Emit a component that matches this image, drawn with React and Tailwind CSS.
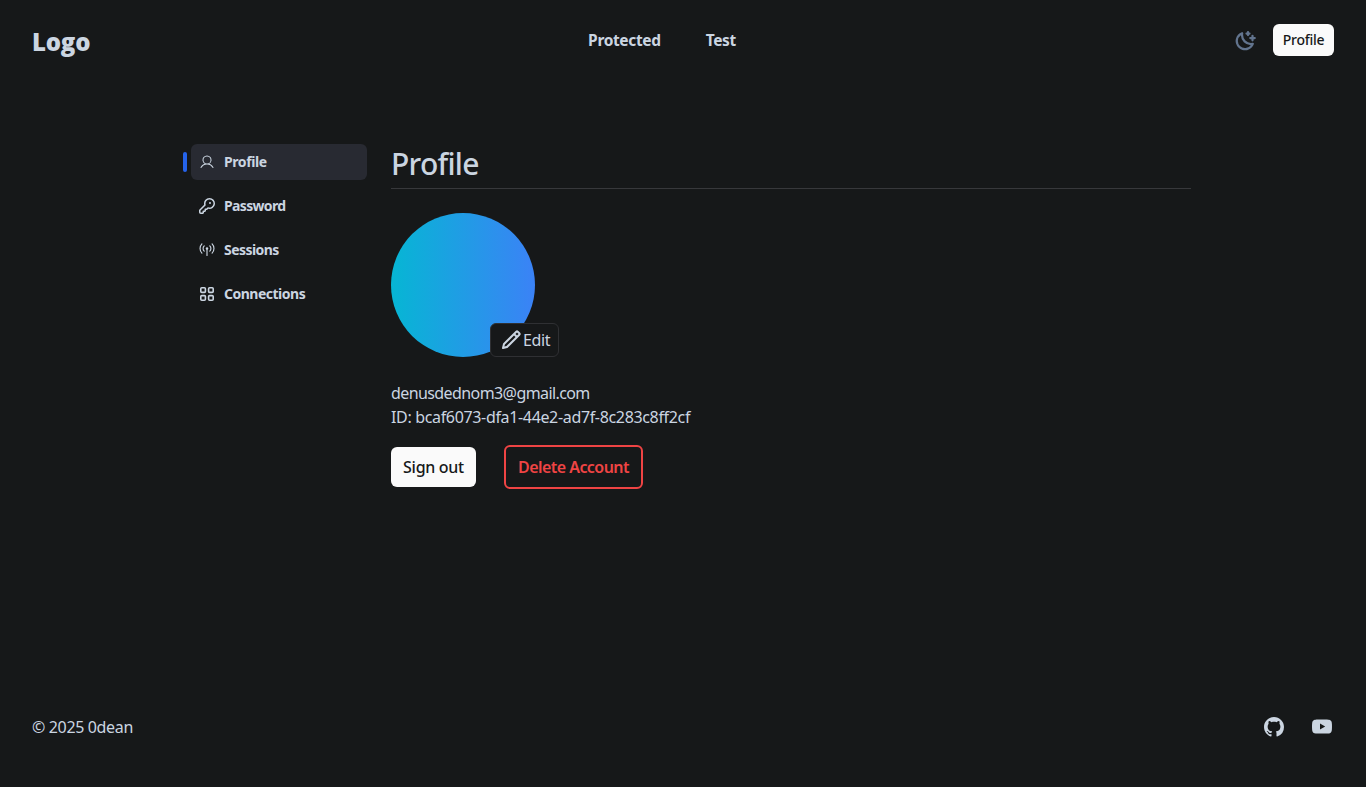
import { PiMoonStarsBold, PiUser } from "react-icons/pi";
import { BiPencil } from "react-icons/bi";
import { BsGithub, BsYoutube } from "react-icons/bs";

function KeyIcon({ size }) {
  return (
    <svg width={size} height={size} viewBox="0 0 16 16" fill="currentColor">
      <path d="M10.5 0a5.499 5.499 0 1 1-1.288 10.848l-.932.932a.749.749 0 0 1-.53.22H7v.75a.749.749 0 0 1-.22.53l-.5.5a.749.749 0 0 1-.53.22H5v.75a.749.749 0 0 1-.22.53l-.5.5a.749.749 0 0 1-.53.22h-2A1.75 1.75 0 0 1 0 14.25v-2c0-.199.079-.389.22-.53l4.932-4.932A5.5 5.5 0 0 1 10.5 0Zm-4 5.5c-.001.431.069.86.205 1.269a.75.75 0 0 1-.181.768L1.5 12.56v1.69c0 .138.112.25.25.25h1.69l.06-.06v-1.19a.75.75 0 0 1 .75-.75h1.19l.06-.06v-1.19a.75.75 0 0 1 .75-.75h1.19l1.023-1.025a.75.75 0 0 1 .768-.18A4 4 0 1 0 6.5 5.5ZM11 6a1 1 0 1 1 0-2 1 1 0 0 1 0 2Z" />
    </svg>
  );
}

function BroadcastIcon({ size }) {
  return (
    <svg width={size} height={size} viewBox="0 0 16 16" fill="none" stroke="currentColor" strokeWidth="1.15" strokeLinecap="round">
      <path d="M2.9 1.9a6.6 6.6 0 0 0 0 9.2M13.1 1.9a6.6 6.6 0 0 1 0 9.2M5.2 3.9a3.6 3.6 0 0 0 0 5.2M10.8 3.9a3.6 3.6 0 0 1 0 5.2M8 6.5v7" />
      <circle cx="8" cy="6.5" r="1.2" fill="currentColor" stroke="none" />
    </svg>
  );
}

function AppsIcon({ size }) {
  return (
    <svg width={size} height={size} viewBox="0 0 16 16" fill="none" stroke="currentColor" strokeWidth="1.6">
      <rect x="1.8" y="1.8" width="4.6" height="4.6" rx="1" />
      <rect x="9.6" y="1.8" width="4.6" height="4.6" rx="1" />
      <rect x="1.8" y="9.6" width="4.6" height="4.6" rx="1" />
      <rect x="9.6" y="9.6" width="4.6" height="4.6" rx="1" />
    </svg>
  );
}

const links = [
  { label: "Profile", icon: PiUser, active: true, track: "tracking-[-0.4px]" },
  { label: "Password", icon: KeyIcon, track: "tracking-[-0.65px]" },
  { label: "Sessions", icon: BroadcastIcon, track: "tracking-[-0.55px]" },
  { label: "Connections", icon: AppsIcon, track: "tracking-[-0.5px]" },
];

function Header() {
  return (
    <header className="flex h-20 items-center justify-between px-8">
      <div className="w-[158px] pt-1 font-['Open_Sans',sans-serif] text-2xl font-extrabold tracking-[-0.2px]">Logo</div>
      <nav className="flex gap-[45px] pt-0.5 text-[15.5px] font-bold tracking-[-0.35px]">
        <a>Protected</a>
        <a>Test</a>
      </nav>
      <div className="flex w-[200px] items-center justify-end gap-4">
        <PiMoonStarsBold size={24} className="mt-px text-slate-500" />
        <button className="h-8 w-[61px] rounded-md bg-neutral-50 text-sm font-medium tracking-[-0.25px] text-[#161819]">
          Profile
        </button>
      </div>
    </header>
  );
}

function Sidebar() {
  return (
    <ul className="flex w-[184px] shrink-0 flex-col gap-2">
      {links.map(({ label, icon: Icon, active, track }) => (
        <li key={label} className="flex items-center gap-1">
          <span className={active ? "h-5 w-1 rounded-sm bg-[#2563eb]" : "h-5 w-1"} />
          <a
            className={
              active
                ? "flex h-9 flex-1 items-center gap-[9px] rounded-md bg-[#282a32] pl-2 text-sm font-bold"
                : "flex h-9 flex-1 items-center gap-[9px] rounded-md pl-2 text-sm font-bold"
            }
          >
            <Icon size={16} />
            <span className={track}>{label}</span>
          </a>
        </li>
      ))}
    </ul>
  );
}

export default function App() {
  return (
    <div className="flex h-[787px] flex-col bg-[#161819] font-['Noto_Sans',sans-serif] text-[#cbd5e1]">
      <Header />
      <main className="flex flex-1 gap-6 pt-16 pl-[183px]">
        <Sidebar />
        <section className="w-[800px]">
          <h1 className="h-[45px] border-b border-[#37383b] text-3xl leading-[39px] font-medium tracking-[-0.75px]">Profile</h1>
          <div className="relative mt-6 size-36 rounded-full bg-linear-to-r/srgb from-[#06b6d4] to-[#3b82f6]">
            <button className="absolute top-[110px] left-[99px] flex h-[34px] w-[69px] items-center rounded-md border border-[#2f3033] bg-[#161819] pl-2">
              <BiPencil size={24} />
              <span className="tracking-[-0.4px]">Edit</span>
            </button>
          </div>
          <p className="mt-6 tracking-[-0.59px]">denusdednom3@gmail.com</p>
          <p className="tracking-[-0.34px]">ID: bcaf6073-dfa1-44e2-ad7f-8c283c8ff2cf</p>
          <div className="mt-4 flex items-center gap-7">
            <button className="h-10 w-[85px] rounded-md bg-neutral-50 font-medium tracking-[-0.3px] text-[#161819]">Sign out</button>
            <button className="h-11 w-[139px] rounded-md border-2 border-[#ef4444] font-semibold tracking-[-0.55px] text-[#ef4444]">
              Delete Account
            </button>
          </div>
        </section>
      </main>
      <footer className="flex h-[120px] items-center justify-between px-8">
        <p className="tracking-[-0.35px]">© 2025 0dean</p>
        <div className="flex gap-7 pr-0.5">
          <BsGithub size={20} />
          <BsYoutube size={20} />
        </div>
      </footer>
    </div>
  );
}
